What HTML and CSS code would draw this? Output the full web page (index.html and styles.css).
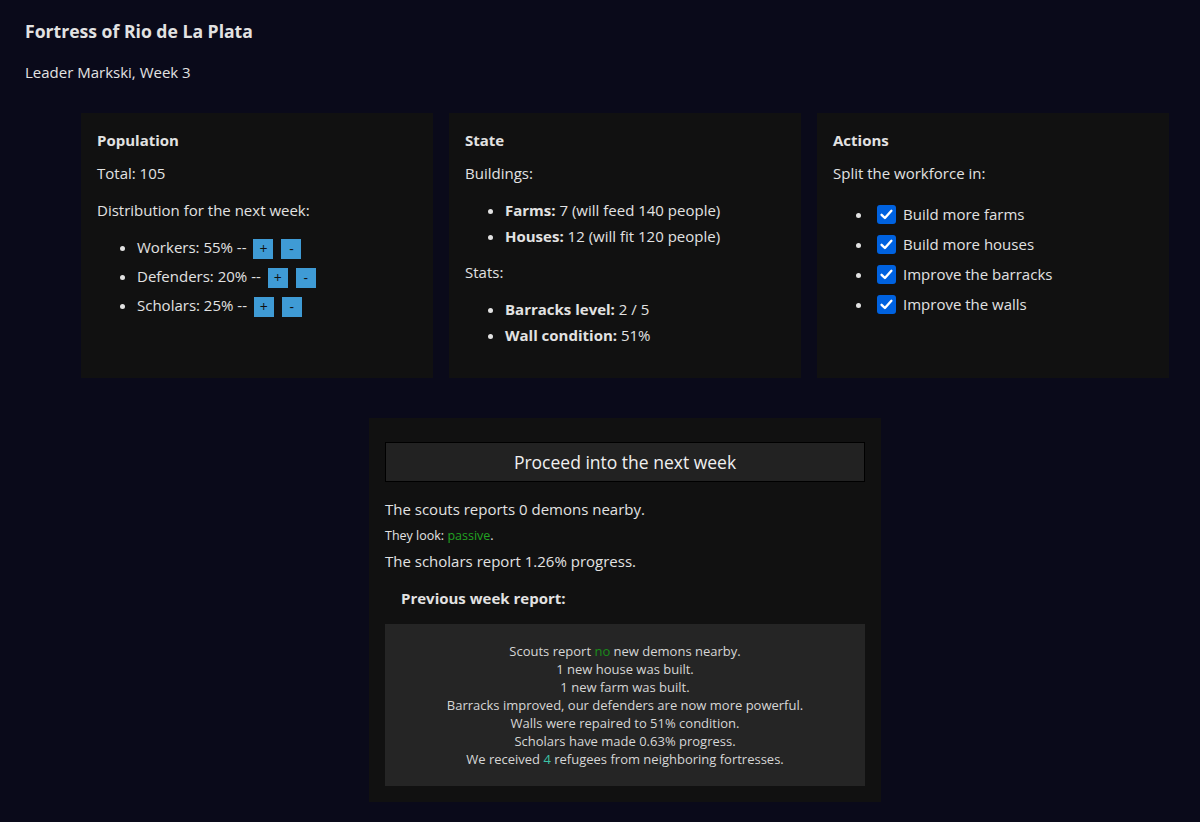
FILE: index.html
```html
<!DOCTYPE html>
<html lang="en">
<head>
<meta charset="utf-8">
<title>Fortress of Rio de La Plata</title>
<link rel="stylesheet" href="styles.css">
</head>
<body>
<header class="page-head">
  <h1 class="title">Fortress of Rio de La Plata</h1>
  <p class="subtitle">Leader Markski, Week 3</p>
</header>
<main class="main">
  <section class="cards">
    <div class="card">
      <h3 class="card-title">Population</h3>
      <p class="line">Total: 105</p>
      <p class="line line-tight">Distribution for the next week:</p>
      <ul class="list list-dist">
        <li>Workers: 55% -- <button class="btn-sm">+</button><button class="btn-sm">-</button></li>
        <li>Defenders: 20% -- <button class="btn-sm">+</button><button class="btn-sm">-</button></li>
        <li>Scholars: 25% -- <button class="btn-sm">+</button><button class="btn-sm">-</button></li>
      </ul>
    </div>
    <div class="card">
      <h3 class="card-title">State</h3>
      <p class="line">Buildings:</p>
      <ul class="list list-state">
        <li><b>Farms:</b> 7 (will feed 140 people)</li>
        <li><b>Houses:</b> 12 (will fit 120 people)</li>
      </ul>
      <p class="line">Stats:</p>
      <ul class="list list-state">
        <li><b>Barracks level:</b> 2 / 5</li>
        <li><b>Wall condition:</b> 51%</li>
      </ul>
    </div>
    <div class="card">
      <h3 class="card-title">Actions</h3>
      <p class="line">Split the workforce in:</p>
      <ul class="list list-actions">
        <li><label><span class="check"><svg viewBox="0 0 19 19" width="19" height="19"><rect x="0" y="0" width="19" height="19" rx="3" fill="#0062e0"/><path d="M4.6 9.8 L7.9 13 L14.4 5.8" fill="none" stroke="#fff" stroke-width="2.4" stroke-linecap="round" stroke-linejoin="round"/></svg></span>Build more farms</label></li>
        <li><label><span class="check"><svg viewBox="0 0 19 19" width="19" height="19"><rect x="0" y="0" width="19" height="19" rx="3" fill="#0062e0"/><path d="M4.6 9.8 L7.9 13 L14.4 5.8" fill="none" stroke="#fff" stroke-width="2.4" stroke-linecap="round" stroke-linejoin="round"/></svg></span>Build more houses</label></li>
        <li><label><span class="check"><svg viewBox="0 0 19 19" width="19" height="19"><rect x="0" y="0" width="19" height="19" rx="3" fill="#0062e0"/><path d="M4.6 9.8 L7.9 13 L14.4 5.8" fill="none" stroke="#fff" stroke-width="2.4" stroke-linecap="round" stroke-linejoin="round"/></svg></span>Improve the barracks</label></li>
        <li><label><span class="check"><svg viewBox="0 0 19 19" width="19" height="19"><rect x="0" y="0" width="19" height="19" rx="3" fill="#0062e0"/><path d="M4.6 9.8 L7.9 13 L14.4 5.8" fill="none" stroke="#fff" stroke-width="2.4" stroke-linecap="round" stroke-linejoin="round"/></svg></span>Improve the walls</label></li>
      </ul>
    </div>
  </section>
  <section class="turn">
    <button class="proceed">Proceed into the next week</button>
    <p class="scouts">The scouts reports 0 demons nearby.</p>
    <p class="look">They look: <span class="passive">passive</span>.</p>
    <p class="scholars">The scholars report 1.26% progress.</p>
    <h3 class="prev-title">Previous week report:</h3>
    <div class="report">
      <div>Scouts report <span class="no">no</span> new demons nearby.</div>
      <div>1 new house was built.</div>
      <div>1 new farm was built.</div>
      <div>Barracks improved, our defenders are now more powerful.</div>
      <div>Walls were repaired to 51% condition.</div>
      <div>Scholars have made 0.63% progress.</div>
      <div>We received <span class="four">4</span> refugees from neighboring fortresses.</div>
    </div>
  </section>
</main>
</body>
</html>
```

FILE: styles.css
```css
* { box-sizing: border-box; }
html, body { margin: 0; padding: 0; }
body {
  background: #0a0a1a;
  color: #e2e2e2;
  font-family: "Open Sans", "Noto Sans", sans-serif;
  font-size: 15px;
  line-height: 22px;
}
.page-head { padding: 19px 25px 0; }
.title {
  margin: 0;
  font-size: 17.6px;
  line-height: 24px;
  font-weight: 700;
}
.subtitle { margin: 18px 0 0; line-height: 22px; }

.main { margin: 30px 0 20px 81px; width: 1088px; }
.cards { display: flex; gap: 16px; }
.card {
  flex: 1 1 0;
  background: #111111;
  height: 265px;
  padding: 16px;
}
.card-title {
  margin: 0 0 11px;
  font-size: 15px;
  line-height: 22px;
  font-weight: 700;
}
.line { margin: 0 0 15px; }
.line-tight { margin-bottom: 12px; }
.list { margin: 0; padding-left: 40px; }
.list-dist li { height: 29px; line-height: 29px; }
.list-state { margin: 0 0 14px; }
.list-state li { margin-bottom: 4px; }
.list-state b { font-weight: 700; }
.list-actions li { height: 30px; line-height: 30px; }
.list-actions label { display: inline-flex; align-items: center; height: 30px; vertical-align: top; }
.check { display: inline-flex; width: 19px; height: 19px; margin: 0 7px 0 4px; }

.btn-sm {
  display: inline-block;
  width: 20px;
  height: 20px;
  padding: 0;
  margin: 0 8px 0 0;
  border: 0;
  background: #3f9bd5;
  color: #111;
  font-family: "Open Sans", sans-serif;
  font-size: 14px;
  line-height: 20px;
  vertical-align: middle;
  text-align: center;
}
.btn-sm:first-of-type { margin-left: 3px; }

.turn {
  width: 512px;
  margin: 40px auto 0;
  background: #111111;
  padding: 24px 16px 16px;
}
.proceed {
  display: block;
  width: 100%;
  height: 40px;
  background: #222222;
  border: 1px solid #000;
  color: #f0f0f0;
  font-family: "Open Sans", sans-serif;
  font-size: 17.5px;
  padding: 0;
  cursor: pointer;
}
.scouts { margin: 16px 0 7px; }
.look { margin: 0 0 5px; font-size: 12.5px; line-height: 18px; }
.passive { color: #22a322; }
.scholars { margin: 0 0 15px; }
.prev-title {
  margin: 0 0 15px 16px;
  font-size: 15px;
  line-height: 22px;
  font-weight: 700;
}
.report {
  background: #252525;
  padding: 18px 8px;
  text-align: center;
  font-size: 13px;
  line-height: 18px;
  color: #d6d6d6;
}
.no { color: #1a8c1a; }
.four { color: #3cc3a6; }
```
